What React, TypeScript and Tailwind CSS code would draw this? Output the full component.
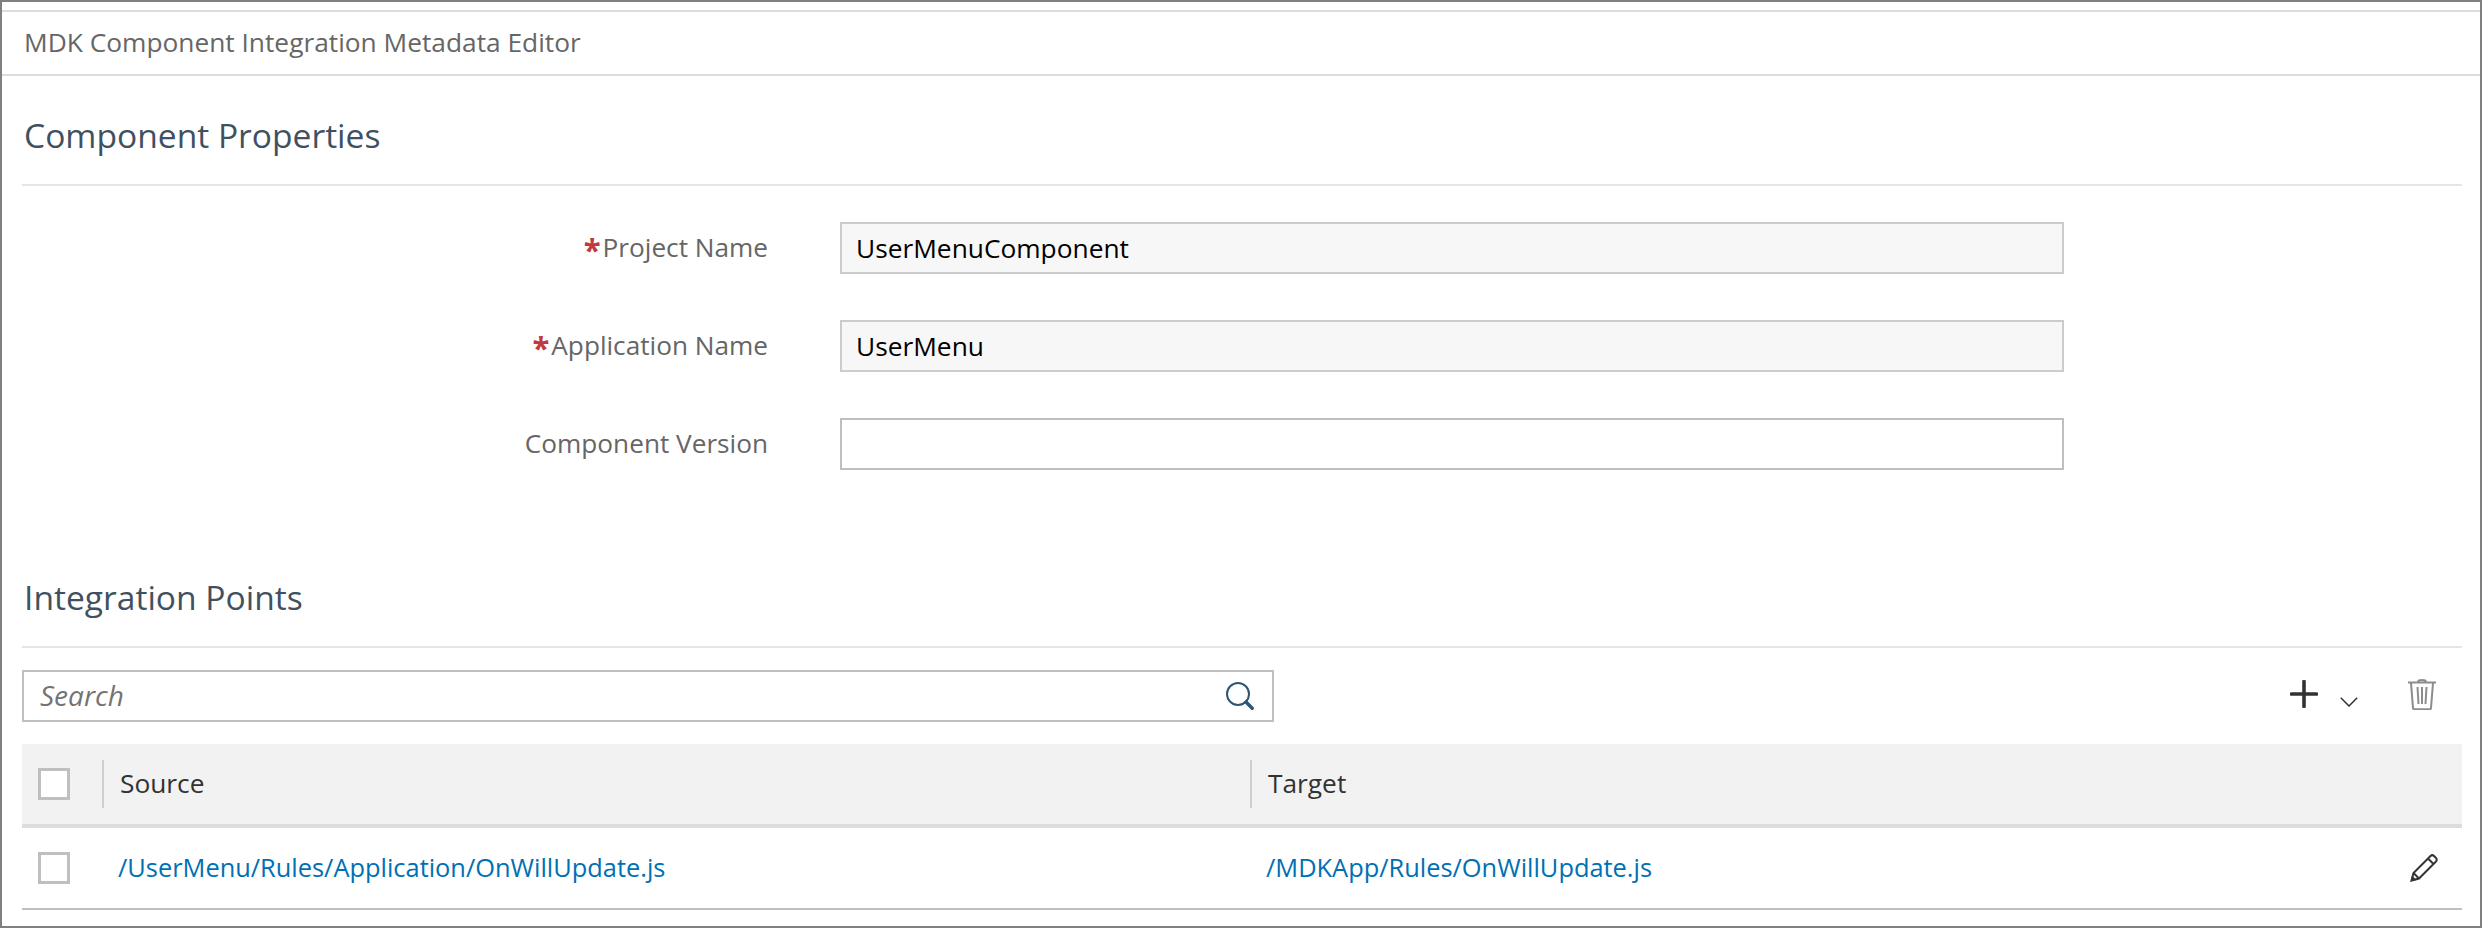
const font = "font-['Open_Sans',sans-serif]";

function FormRow({
  label,
  value,
  required,
}: {
  label: string;
  value: string;
  required?: boolean;
}) {
  return (
    <div className="flex h-[52px] items-center">
      <div className="flex w-[746px] items-center justify-end text-[26.2px] text-[#666666]">
        {required && (
          <span className="mr-[2px] h-[36px] text-[31px] leading-[38px] font-bold text-[#c0393f]">*</span>
        )}
        <span>{label}</span>
      </div>
      <input
        readOnly
        value={value}
        className={`ml-[72px] h-[52px] w-[1224px] border-2 px-[14px] text-[26.3px] text-black outline-none ${
          value ? "border-[#cccccc] bg-[#f7f7f7]" : "border-[#bfbfbf] bg-white"
        }`}
      />
    </div>
  );
}

function CheckBox() {
  return <div className="h-8 w-8 shrink-0 border-[3px] border-[#bfbfbf] bg-white" />;
}

export default function App() {
  return (
    <div
      className={`${font} h-[928px] w-[2482px] overflow-hidden border-2 border-[#808080] bg-white pt-2`}
    >
      {/* Title bar */}
      <div className="flex h-[66px] items-center border-y-2 border-[#dcdce0] pl-[22px] text-[26.3px] text-[#666666]">
        MDK Component Integration Metadata Editor
      </div>

      <div className="pl-5 pr-[18px]">
        <h2 className="flex h-[108px] items-center pt-[11px] pl-[2px] text-[33.6px] text-[#3f5161]">
          Component Properties
        </h2>
        <div className="h-[2px] bg-[#e5e5e5]" />

        <div className="mt-9 flex flex-col gap-[46px]">
          <FormRow label="Project Name" value="UserMenuComponent" required />
          <FormRow label="Application Name" value="UserMenu" required />
          <FormRow label="Component Version" value="" />
        </div>

        <h2 className="mt-[78px] flex h-[98px] items-center pl-[2px] text-[33.6px] text-[#3f5161]">
          Integration Points
        </h2>
        <div className="h-[2px] bg-[#e5e5e5]" />

        {/* Toolbar */}
        <div className="mt-[22px] flex h-[52px] items-center">
          <div className="flex h-[52px] w-[1252px] items-center border-2 border-[#bfbfbf] pl-[16px] pr-[18px]">
            <span className="-mt-[2px] flex-1 text-[28px] italic text-[#737373]">Search</span>
            <svg width="28" height="28" viewBox="0 0 28 28" className="text-[#2f5476]">
              <circle cx="12" cy="12" r="11" fill="none" stroke="currentColor" strokeWidth="2" />
              <path d="M20 20 26.2 26.2" stroke="currentColor" strokeWidth="3.4" strokeLinecap="round" />
            </svg>
          </div>
          <div className="ml-auto flex items-center">
            <svg width="28" height="28" viewBox="0 0 28 28" className="-mt-1 text-[#333333]">
              <path d="M14 1.5v25M1.5 14h25" stroke="currentColor" strokeWidth="3.6" strokeLinecap="round" />
            </svg>
            <svg width="18" height="10" viewBox="0 0 18 10" className="ml-[22px] mt-3 text-[#333333]">
              <path d="M.8.8 9 9 17.2.8" fill="none" stroke="currentColor" strokeWidth="1.5" />
            </svg>
            <svg width="28" height="32" viewBox="0 0 28 32" className="-mt-1 ml-[50px] mr-[26px] text-[#8c8c8c]">
              <path
                d="M0 4.5h28M10 3.5c.5-2 7.5-2 8 0M3 5l2 25c0 .8.6 1.2 1.2 1.2h15.6c.6 0 1.2-.4 1.2-1.2l2-25M9.5 9l1 17M14 9v17M18.5 9l-1 17"
                fill="none"
                stroke="currentColor"
                strokeWidth="2"
              />
            </svg>
          </div>
        </div>

        {/* Table */}
        <div className="mt-[22px] flex h-[84px] items-center border-b-4 border-[#dcdcdc] bg-[#f2f2f2] text-[26.3px] text-[#333333]">
          <div className="flex w-[80px] items-center pl-4">
            <CheckBox />
          </div>
          <div className="flex h-12 w-[1148px] items-center border-l-2 border-[#cfcfcf] pl-4">Source</div>
          <div className="flex h-12 items-center border-l-2 border-[#cfcfcf] pl-4">Target</div>
        </div>
        <div className="flex h-[82px] items-center border-b-2 border-[#c0c0c0] text-[25.4px] text-[#0070b4]">
          <div className="flex w-[96px] items-center pl-4">
            <CheckBox />
          </div>
          <div className="-mt-[2px] w-[1148px]">/UserMenu/Rules/Application/OnWillUpdate.js</div>
          <div className="-mt-[2px] flex-1">/MDKApp/Rules/OnWillUpdate.js</div>
          <svg width="28" height="28" viewBox="0 0 28 28" className="mr-6 text-[#333333]">
            <path
              d="M1.5 26.5 3.5 19 20.5 2c1-1 2.5-1 3.5 0l2 2c1 1 1 2.5 0 3.5L9 24.5ZM18 4.5l5.5 5.5M3.5 19 9 24.5"
              fill="none"
              stroke="currentColor"
              strokeWidth="2"
            />
            <path d="M0.8 27.2 2 21.5 6.5 26Z" fill="currentColor" />
          </svg>
        </div>
      </div>
    </div>
  );
}
